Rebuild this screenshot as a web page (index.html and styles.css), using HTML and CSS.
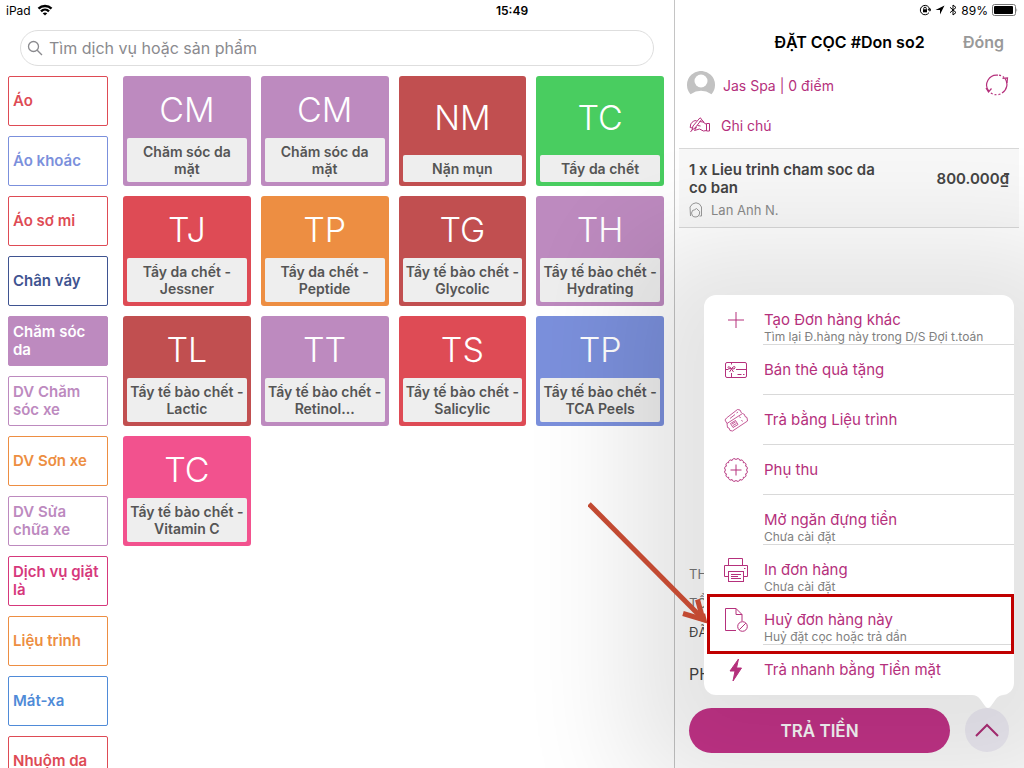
FILE: index.html
```html
<!DOCTYPE html>
<html lang="vi">
<head>
    <meta charset="UTF-8">
    <meta name="viewport" content="width=device-width, initial-scale=1.0">
    <title>ĐẶT CỌC #Don so2</title>
    <link rel="stylesheet" href="styles.css">
</head>
<body>
    <div class="status-bar">
        <span class="status-left">iPad
            <svg width="16" height="12" viewBox="0 0 16 12" fill="none" stroke="#000" stroke-width="2.400">
                <path d="M1.500 4.600C5 1.100 11 1.100 14.500 4.600"/>
                <path d="M4 7.300C6.300 5 9.700 5 12 7.300"/>
                <path d="M8 11.500L5.700 9.300C7 8.100 9 8.100 10.300 9.300Z" fill="#000" stroke="none"/>
            </svg>
        </span>
        <span class="status-time">15:49</span>
        <span class="status-right">
            <svg width="12" height="12" viewBox="0 0 12 12" fill="none" stroke="#000">
                <path d="M10 8.600A4.700 4.700 0 1 1 10.700 5.500M9 5.200h3.200L10.700 7.200z"/>
                <rect x="4" y="5.300" width="4" height="3" fill="#000" stroke="none"/>
                <path d="M4.700 5.500V4.500a1.300 1.300 0 0 1 2.600 0v1"/>
            </svg>
            <svg width="10" height="10" viewBox="0 0 10 10"><path d="M9.500 .500L.500 5h4.500v4.500z"/></svg>
            <svg width="8" height="12" viewBox="0 0 8 12" fill="none" stroke="#000"><path d="M1 3.300l6 5.200L4 11V1l3 2.500-6 5.200"/></svg>
            <span>89%</span>
            <svg width="26" height="12" viewBox="0 0 26 12">
                <rect x=".5" y=".5" width="23" height="11" rx="2" fill="none" stroke="#777"/>
                <rect x="2" y="2" width="19" height="8" rx="1"/>
                <path d="M24.500 4v4q1.500-2 0-4" fill="#777"/>
            </svg>
        </span>
    </div>

    <main class="catalog">
        <div class="search">
            <svg width="16" height="16" viewBox="0 0 16 16" fill="none" stroke="#8a8a8e" stroke-width="1.300">
                <circle cx="6.500" cy="6.500" r="5"/><path d="M10.200 10.200L15 15"/>
            </svg>
            <input type="search" placeholder="Tìm dịch vụ hoặc sản phẩm" aria-label="Tìm dịch vụ hoặc sản phẩm">
        </div>
        <div class="catalog-body">
            <nav class="categories">
                <button class="category red">Áo</button>
                <button class="category blue">Áo khoác</button>
                <button class="category red">Áo sơ mi</button>
                <button class="category navy">Chân váy</button>
                <button class="category purple active">Chăm sóc da</button>
                <button class="category purple">DV Chăm sóc xe</button>
                <button class="category orange">DV Sơn xe</button>
                <button class="category purple">DV Sửa chữa xe</button>
                <button class="category crimson">Dịch vụ giặt là</button>
                <button class="category orange">Liệu trình</button>
                <button class="category sky">Mát-xa</button>
                <button class="category red">Nhuộm da</button>
            </nav>
            <div class="tiles">
                <button class="tile purple"><b>CM</b><span>Chăm sóc da mặt</span></button>
                <button class="tile purple"><b>CM</b><span>Chăm sóc da mặt</span></button>
                <button class="tile brick"><b>NM</b><span>Nặn mụn</span></button>
                <button class="tile green"><b>TC</b><span>Tẩy da chết</span></button>
                <button class="tile red"><b>TJ</b><span>Tẩy da chết - Jessner</span></button>
                <button class="tile orange"><b>TP</b><span>Tẩy da chết - Peptide</span></button>
                <button class="tile brick"><b>TG</b><span>Tẩy tế bào chết - Glycolic</span></button>
                <button class="tile purple"><b>TH</b><span>Tẩy tế bào chết - Hydrating</span></button>
                <button class="tile brick"><b>TL</b><span>Tẩy tế bào chết - Lactic</span></button>
                <button class="tile purple"><b>TT</b><span>Tẩy tế bào chết - Retinol...</span></button>
                <button class="tile red"><b>TS</b><span>Tẩy tế bào chết - Salicylic</span></button>
                <button class="tile blue"><b>TP</b><span>Tẩy tế bào chết - TCA Peels</span></button>
                <button class="tile pink"><b>TC</b><span>Tẩy tế bào chết - Vitamin C</span></button>
            </div>
        </div>
    </main>

    <aside class="order">
        <header class="order-header">
            <h1>ĐẶT CỌC #Don so2</h1>
            <button class="close">Đóng</button>
        </header>

        <div class="customer">
            <svg class="avatar" width="28" height="28" viewBox="0 0 28 28">
                <circle cx="14" cy="14" r="14" fill="#fff"/>
                <path d="M3.500 23.200A14 14 0 1 1 24.500 23.200Q14 16.500 3.500 23.200Z" fill="#c2c2c2"/>
                <circle cx="14" cy="10" r="6.500" fill="#fff"/>
            </svg>
            <a href="#">Jas Spa | 0 điểm</a>
            <button class="refresh" aria-label="Đổi khách">
                <svg width="24" height="22" viewBox="0 0 24 22" fill="none" stroke="#b5307c" stroke-width="1.200">
                    <path d="M4 17.500A10 10 0 0 1 13 1.200M20 4.500A10 10 0 0 1 17 19"/>
                    <path d="M14 1.200q3 .4 5 2.300M15.500 20Q10 22 5.500 18.800" stroke-dasharray="2 2"/>
                    <path d="M1 14l2.500 4 3-3.500M17.500 4.300l5-.3-.5 5"/>
                </svg>
            </button>
        </div>
        <button class="note">
            <svg width="22" height="16" viewBox="0 0 22 16" fill="none" stroke="#b5307c" stroke-linejoin="round">
                <path d="M3 13l1-4L11 .8l1.800 1.500L6 11z M3 13L1.500 15"/>
                <path d="M7.500 3.500L4.500 4Q.8 6.500 1.200 10.500L3.500 11M10.500 4.500l3.500 .5 3.500 2.500v6l-3 .5-4-2-5 1.500 2-3.500M12.500 2.500l2.500 2.700M8.500 8.500l3 .5"/>
                <path d="M17.500 6.500h3v7.500h-3z"/>
            </svg>
            Ghi chú
        </button>

        <section class="item">
            <div class="item-name">
                <h2>1 x Lieu trinh cham soc da co ban</h2>
                <p>
                    <svg width="14" height="16" viewBox="0 0 14 16" fill="none" stroke="#999">
                        <path d="M1.500 14L1 5Q3 1 7 .8q4 .2 5.500 4.200V14h-2"/>
                        <path d="M3.500 14q-2-3 0-5.500Q6 8 7.500 6.500L9 8q2.500 1 1.500 4-1 3-3.500 3-2.500 0-3.500-1z"/>
                    </svg>
                    Lan Anh N.
                </p>
            </div>
            <strong>800.000₫</strong>
        </section>

        <div class="summary">
            <p>TH</p>
            <p>TỔ</p>
            <p class="dark">ĐÃ</p>
            <p class="total">PH</p>
        </div>

        <footer class="pay-bar">
            <button class="pay">TRẢ TIỀN</button>
            <button class="more" aria-label="Thêm">
                <svg width="24" height="14" viewBox="0 0 24 14" fill="none" stroke="#b02e78" stroke-width="2"><path d="M1 13L12 2l11 11"/></svg>
            </button>

            <div class="popover">
                <ul>
                    <li>
                        <button>
                            <svg viewBox="0 0 24 24"><path d="M12 4v16M4 12h16"/></svg>
                            <span>Tạo Đơn hàng khác<small>Tìm lại Đ.hàng này trong D/S Đợi t.toán</small></span>
                        </button>
                    </li>
                    <li>
                        <button>
                            <svg viewBox="0 0 24 24">
                                <rect x="1.500" y="4.500" width="21" height="15" rx="1.500"/>
                                <path d="M7.500 4.500v2M7.500 15v4.500M1.500 11.500h3M12 11.500h10.500M13.500 16.500h4M19 16.500h1.500"/>
                                <path d="M7.500 10.500Q4 7.500 4 9.500T7.500 10.500Q11 12 11 9.500T7.500 10.500zM7.500 11L5.500 14M7.500 11l2 3"/>
                            </svg>
                            <span>Bán thẻ quà tặng</span>
                        </button>
                    </li>
                    <li>
                        <button>
                            <svg viewBox="0 0 24 24" class="thin">
                                <path d="M3 15.500L1 12l1.500-2L13.500 1.500l2.500 .5 1.500 3"/>
                                <path d="M3 15.500L18.500 5.500l2 1 .5 2 2 1 .5 3.500-15 10-2.500-.5-1-2.500-1.500-.5z"/>
                                <path d="M15.500 8.500l1 1.500M17.500 12l1 1.500M6.500 15.500l5-3 2.500 4-5 3zM8 16l3.500-2M9 17.500l3.500-2M6 10.500l5-4M12.500 5l1.500-1"/>
                            </svg>
                            <span>Trả bằng Liệu trình</span>
                        </button>
                    </li>
                    <li>
                        <button>
                            <svg viewBox="0 0 24 24">
                                <path d="M12 1.700A2.100 2.100 0 0 1 15.900 2.500 2.100 2.100 0 0 1 19.300 4.700 2.100 2.100 0 0 1 21.500 8.100 2.100 2.100 0 0 1 22.300 12 2.100 2.100 0 0 1 21.500 15.900 2.100 2.100 0 0 1 19.300 19.300 2.100 2.100 0 0 1 15.900 21.500 2.100 2.100 0 0 1 12 22.300 2.100 2.100 0 0 1 8.100 21.500 2.100 2.100 0 0 1 4.700 19.300 2.100 2.100 0 0 1 2.500 15.900 2.100 2.100 0 0 1 1.700 12 2.100 2.100 0 0 1 2.500 8.100 2.100 2.100 0 0 1 4.700 4.700 2.100 2.100 0 0 1 8.100 2.500 2.100 2.100 0 0 1 12 1.700Z"/>
                                <path d="M12 6.500v11M6.500 12h11"/>
                            </svg>
                            <span>Phụ thu</span>
                        </button>
                    </li>
                    <li>
                        <button>
                            <i></i>
                            <span>Mở ngăn đựng tiền<small>Chưa cài đặt</small></span>
                        </button>
                    </li>
                    <li>
                        <button>
                            <svg viewBox="0 0 24 24">
                                <path d="M4.500 7.500v-7h14v7M4.500 18.500h-4v-11h23v11h-4"/>
                                <rect x="4.500" y="13.500" width="15" height="10"/>
                                <path d="M7 16.500h10M7 18.500h7M7 20.500h10M20 10.500h1.500"/>
                            </svg>
                            <span>In đơn hàng<small>Chưa cài đặt</small></span>
                        </button>
                    </li>
                    <li>
                        <button>
                            <svg viewBox="0 0 24 24">
                                <path d="M12 22.500H1.500V.500h10.500l6 6V13M12 .500v6h6"/>
                                <circle cx="18.500" cy="18.500" r="4.800"/><path d="M15.200 21.800l6.600-6.600"/>
                            </svg>
                            <span>Huỷ đơn hàng này<small>Huỷ đặt cọc hoặc trả dần</small></span>
                        </button>
                        <div class="highlight"></div>
                        <svg class="pointer-arrow" width="120" height="122" viewBox="0 0 120 122" fill="none" stroke="#c24a32" stroke-width="5">
                            <path d="M1 2L113 115"/>
                            <path d="M95 111.500L115 117.500 109.500 97.500"/>
                            <path d="M119.500 121.500L110 118l7-7z" fill="#c24a32" stroke="none"/>
                        </svg>
                    </li>
                    <li>
                        <button>
                            <svg viewBox="0 0 24 24" class="solid"><path d="M14.500 1L6 13h5L9 23l8.500-13h-5z"/></svg>
                            <span>Trả nhanh bằng Tiền mặt</span>
                        </button>
                    </li>
                </ul>
                <svg class="popover-tip" width="32" height="14" viewBox="0 0 32 14"><path d="M0 0Q5 0 8 4L13 11Q16 15 19 11L24 4Q27 0 32 0Z" fill="#fff"/></svg>
            </div>
        </footer>
    </aside>
</body>
</html>
```
FILE: styles.css
```css
* {
    box-sizing: border-box;
}
body {
    margin: 0;
    height: 100vh;
    display: grid;
    grid-template-columns: 1fr 350px;
    grid-template-rows: 100vh;
    overflow: hidden;
    background: #fff;
    font-family: Inter, "Noto Sans", sans-serif;
    color: #444;
}
button {
    font: inherit;
    color: inherit;
    background: none;
    border: 0;
    padding: 0;
    text-align: left;
    cursor: pointer;
}
h1, h2, p, ul {
    margin: 0;
    padding: 0;
}

/* status bar lies over both columns */
.status-bar {
    position: absolute;
    top: 0;
    left: 0;
    right: 0;
    z-index: 3;
    display: grid;
    grid-template-columns: 1fr auto 1fr;
    align-items: center;
    height: 20px;
    padding: 0 6px;
    font-size: 12px;
    color: #000;
}
.status-left, .status-right {
    display: flex;
    align-items: center;
    gap: 6px;
}
.status-right {
    justify-content: flex-end;
    gap: 4px;
}
.status-time {
    font-size: 12px;
    font-weight: 600;
}

/* catalog */
.catalog {
    padding: 30px 10px 0 8px;
    overflow: hidden;
}
.search {
    display: flex;
    align-items: center;
    gap: 6px;
    height: 36px;
    margin: 0 10px 10px 12px;
    padding: 0 6px;
    border: 1px solid #dedede;
    border-radius: 18px;
}
.search input {
    flex: 1;
    border: 0;
    outline: 0;
    padding: 0;
    background: none;
    font: inherit;
    font-size: 16px;
}
.search input::placeholder {
    color: #8a8a8e;
}
.catalog-body {
    display: grid;
    grid-template-columns: 100px 1fr;
    gap: 15px;
    align-items: start;
}
.categories {
    display: grid;
    grid-auto-rows: 50px;
    gap: 10px;
}
.category {
    padding: 0 4px;
    border: 1px solid var(--tone);
    border-radius: 2px;
    color: var(--tone);
    font-size: 15px;
    font-weight: 600;
    line-height: 18px;
}
.category.active {
    background: var(--tone);
    color: #fff;
}
.tiles {
    display: grid;
    grid-template-columns: repeat(4, 1fr);
    grid-auto-rows: 110px;
    gap: 10px;
}
.tile {
    display: flex;
    flex-direction: column;
    padding: 4px;
    border-radius: 3px;
    background: var(--tone);
    text-align: center;
}
.tile b {
    flex: 1;
    display: flex;
    align-items: center;
    justify-content: center;
    color: #fff;
    font-size: 34px;
    font-weight: 300;
}
.tile span {
    padding: 5px 2px;
    border-radius: 2px;
    background: #eee;
    color: #555;
    font-size: 14px;
    font-weight: 600;
    line-height: 17px;
}
.red { --tone: #de4b55; }
.crimson { --tone: #d6387c; }
.blue { --tone: #7b90dc; }
.navy { --tone: #3f5491; }
.purple { --tone: #bd8abf; }
.orange { --tone: #ed8e42; }
.sky { --tone: #4f8bd8; }
.brick { --tone: #c14f50; }
.green { --tone: #49cd60; }
.pink { --tone: #f2528e; }

/* order panel */
.order {
    position: relative;
    display: flex;
    flex-direction: column;
    padding-top: 20px;
    border-left: 1px solid #c4c4c4;
}
.order-header {
    display: grid;
    grid-template-columns: 1fr auto 1fr;
    align-items: center;
    height: 44px;
    padding: 0 20px;
}
.order-header h1 {
    grid-column: 2;
    color: #000;
    font-size: 16px;
    font-weight: 600;
}
.close {
    justify-self: end;
    color: #999;
    font-size: 16px;
    font-weight: 600;
}
.customer, .note {
    display: flex;
    align-items: center;
    color: #b5307c;
    font-size: 14px;
}
.customer {
    gap: 8px;
    height: 42px;
    padding: 0 15px 0 12px;
}
.customer a {
    flex: 1;
    color: inherit;
    text-decoration: none;
}
.refresh {
    display: flex;
}
.note {
    gap: 10px;
    height: 38px;
    padding-left: 14px;
}
.item {
    display: flex;
    align-items: flex-start;
    justify-content: space-between;
    height: 80px;
    margin: 4px 5px 0 4px;
    padding: 12px 10px 0;
    border-top: 1px solid #d8d8d8;
    border-bottom: 1px solid #d8d8d8;
    background: #f8f8f8;
}
.item h2, .item strong {
    font-size: 15px;
    font-weight: 600;
    line-height: 18px;
}
.item h2 {
    max-width: 200px;
}
.item strong {
    padding-top: 9px;
}
.item p {
    display: flex;
    align-items: center;
    gap: 8px;
    padding-top: 4px;
    color: #8a8a8a;
    font-size: 13px;
    line-height: 18px;
}
.summary {
    margin-top: auto;
    padding: 0 14px 19px;
    color: #777;
    font-size: 13px;
    line-height: 29px;
}
.summary .dark, .summary .total {
    color: #444;
}
.summary .total {
    padding-top: 13px;
    font-size: 16px;
}
.pay-bar {
    position: relative;
    display: flex;
    gap: 15px;
    padding: 0 15px 15px 14px;
}
.pay {
    flex: 1;
    height: 45px;
    border-radius: 23px;
    background: #c6348a;
    color: #fff;
    font-size: 17px;
    font-weight: 600;
    text-align: center;
}
.more {
    display: flex;
    align-items: center;
    justify-content: center;
    width: 44px;
    height: 44px;
    border-radius: 50%;
    background: #f1eff8;
}

/* menu opened by the round button */
.popover {
    position: absolute;
    right: 10px;
    bottom: 73px;
    width: 310px;
    border-radius: 12px;
    background: #fff;
    box-shadow: 0 20px 110px 76px rgba(0, 0, 0, 0.11);
}
.popover ul {
    list-style: none;
}
.popover li {
    position: relative;
}
.popover li > button {
    display: grid;
    grid-template-columns: 24px 1fr;
    gap: 15px;
    width: 100%;
    height: 50px;
    padding-left: 20px;
    color: #b5307c;
    font-size: 15px;
    line-height: 20px;
}
.popover li > button > svg {
    width: 24px;
    height: 24px;
    margin-top: 13px;
    fill: none;
    stroke: #b5307c;
    stroke-width: 1;
}
.popover li > button > .thin {
    stroke-width: 0.8;
}
.popover li > button > .solid {
    fill: #b5307c;
}
.popover span {
    height: 50px;
    padding-top: 15px;
    padding-left: 1px;
    border-bottom: 1px solid #d9d9d9;
}
.popover li:last-child span {
    border-bottom: 0;
}
.popover small {
    display: block;
    color: #808080;
    font-size: 12px;
    line-height: 13px;
}
.popover-tip {
    position: absolute;
    top: 100%;
    right: 10px;
}
.highlight {
    position: absolute;
    top: -1px;
    left: 3px;
    right: 0;
    height: 60px;
    border: 3px solid #c00000;
    pointer-events: none;
    z-index: 1;
}
.pointer-arrow {
    position: absolute;
    right: calc(100% - 4px);
    bottom: 21px;
    z-index: 2;
}
```
